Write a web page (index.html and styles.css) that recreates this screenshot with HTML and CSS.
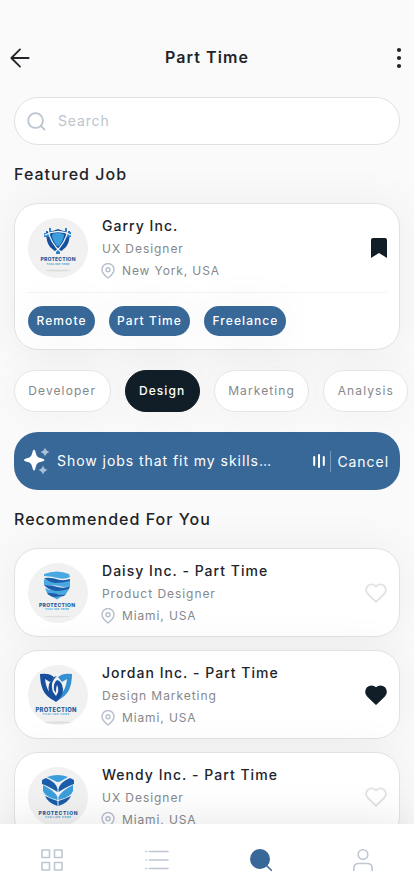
FILE: index.html
```html
<!DOCTYPE html>
<html lang="en">
<head>
<meta charset="utf-8">
<meta name="viewport" content="width=device-width, initial-scale=1">
<title>Part Time</title>
<link rel="stylesheet" href="styles.css">
</head>
<body>
<svg class="defs" aria-hidden="true">
  <symbol id="pin" viewBox="0 0 24 24"><path d="M12 22.500S3 16 3 9.800a9 9 0 0 1 18 0C21 16 12 22.500 12 22.500Z"/><circle cx="12" cy="10" r="3"/></symbol>
  <symbol id="heart" viewBox="0 0 24 22"><path d="M12 20.700 2.900 11.800A6 6 0 0 1 11.300 3.200L12 3.900l.7-.7a6 6 0 0 1 8.400 8.600Z"/></symbol>
</svg>
<div class="screen">
  <header class="topbar">
    <svg class="back" viewBox="0 0 22 22"><path d="M11 1.500 1.500 11 11 20.500M1.500 11H20.500"/></svg>
    <h1>Part Time</h1>
    <svg class="more" viewBox="0 0 6 22"><circle cx="3" cy="3" r="2.100"/><circle cx="3" cy="11" r="2.100"/><circle cx="3" cy="19" r="2.100"/></svg>
  </header>

  <main>
    <div class="search">
      <svg viewBox="0 0 20 20"><circle cx="9" cy="9" r="7.800"/><path d="m14.500 14.500 4 4"/></svg>
      <span>Search</span>
    </div>

    <h2>Featured Job</h2>
    <article class="card featured">
      <div class="job">
        <svg class="logo" viewBox="0 0 60 60">
          <circle cx="30" cy="30" r="30" fill="#f1f1f1"/>
          <path fill="#174f9f" d="M18 13Q24 14 30 11 36 14 42 13 42 24 38 29L30 36 22 29Q18 24 18 13Z"/>
          <path fill="#3b9edb" d="M24 16.500Q30 13 36 16.500 36 22 31 28H29Q24 22 24 16.500Z"/>
          <path fill="#2b7fc6" d="M16 15h5v4h-5ZM38 14h5v5h-5ZM21 10h2v4h-2ZM37 10h2v4h-2ZM28 32h4v4h-4Z"/>
          <path stroke="#f4f7fa" stroke-width="1.300" fill="none" d="M20 11Q22 25 33 34M40 11Q38 25 27 34M17 17Q30 10 43 17"/>
          <text class="brand" x="30" y="43" textLength="35">PROTECTION</text>
          <text class="tagline" x="30" y="46.500" textLength="23">TAGLINE HERE</text>
          <ellipse cx="30" cy="52.500" rx="13" ry="1" fill="#dedede"/>
        </svg>
        <div class="info">
          <h3>Garry Inc.</h3>
          <p>UX Designer</p>
          <p class="place"><svg><use href="#pin"/></svg>New York, USA</p>
        </div>
        <svg class="bookmark" viewBox="0 0 16 20"><path d="M2 0H14Q16 0 16 2V20L8 15 0 20V2Q0 0 2 0Z"/></svg>
      </div>
      <div class="tags"><span>Remote</span><span>Part Time</span><span>Freelance</span></div>
    </article>

    <nav class="chips"><span>Developer</span><span class="active">Design</span><span>Marketing</span><span>Analysis</span></nav>

    <div class="assist">
      <svg class="sparkles" viewBox="0 0 26 28">
        <path fill="#fff" d="M10 2.500Q11 2.500 11.500 5C12.500 9.500 13.500 10.500 18 11.500Q20.500 12 20.500 13T18 14.500C13.500 15.500 12.500 16.500 11.500 21Q11 23.500 10 23.500T8.500 21C7.500 16.500 6.500 15.500 2 14.500Q0 14 0 13T2 11.500C6.500 10.500 7.500 9.500 8.500 5Q9 2.500 10 2.500Z"/>
        <path fill="#a9c0d8" d="M21 0.500Q22 4 25.500 5 22 6 21 9.500 20 6 16.500 5 20 4 21 .5ZM19 18.500Q20 22 23.500 23 20 24 19 27.500 18 24 14.500 23 18 22 19 18.500Z"/>
      </svg>
      <span class="prompt">Show jobs that fit my skills…</span>
      <svg class="wave" viewBox="0 0 12 14"><path d="M1.200 3v8M6 1v12M10.800 3v8"/></svg>
      <span class="cancel">Cancel</span>
    </div>

    <h2>Recommended For You</h2>
    <div class="list">
      <article class="card job">
        <svg class="logo" viewBox="0 0 60 60">
          <circle cx="30" cy="30" r="30" fill="#f1f1f1"/>
          <path fill="#48a9e2" d="M16 11Q29 6 41 11L42 14Q36 17 27 14.500 20 13 16 13ZM16 16Q24 21 33 18 39 16 42 18V23Q36 25 28 22.500 20 22 16 22ZM17 25Q24 29 33 26 38 24.500 41 26L38 31Q33 32 28 31 22 31 19 30ZM22 32.500Q28 35 35 32.500L29 36.500Z"/>
          <path fill="#1b5dab" d="M16 15Q24 14 30 16.500 36 18 42 16V18Q34 20 27 20 20 19 16 15ZM16 22Q24 22 30 24 36 26 42 23L41 26Q34 28 28 28 20 27 16 22ZM19 30Q25 29.500 29 31 33 32 38 31L36 33Q30 34 26 34 21 33 19 30Z"/>
          <text class="brand" x="29" y="43.500" textLength="36">PROTECTION</text>
          <text class="tagline" x="29" y="47" textLength="24">TAGLINE HERE</text>
          <ellipse cx="29" cy="53.500" rx="13" ry=".7" fill="#dedede"/>
        </svg>
        <div class="info">
          <h3>Daisy Inc. - Part Time</h3>
          <p>Product Designer</p>
          <p class="place"><svg><use href="#pin"/></svg>Miami, USA</p>
        </div>
        <svg class="heart"><use href="#heart"/></svg>
      </article>
      <article class="card job">
        <svg class="logo" viewBox="0 0 60 60">
          <circle cx="30" cy="30" r="30" fill="#f1f1f1"/>
          <path fill="#174e9e" d="M12 9Q21 7.500 26 12L22 17 17 14Q18 24 23 29L27 36Q18 32 15 25 12 18 12 9Z"/>
          <path fill="#3590d1" d="M44 9Q35 7.500 30 12L34 17 39 14Q38 24 33 29L29 36Q38 31 41 25 44 18 44 9Z"/>
          <path fill="#174e9e" d="M26 12Q19 18 21 27 23 34 28 37 35 32 35 24 34 16 29 15 25 18 26 25L28 28Q28 22 29 20 32 26 28 31 23 26 24 19 25 14 29 11Z"/>
          <text class="brand big" x="28" y="46.500" textLength="41">PROTECTION</text>
          <text class="tagline" x="28" y="50" textLength="27">TAGLINE HERE</text>
          <ellipse cx="30" cy="57.500" rx="13" ry="1" fill="#dedede"/>
        </svg>
        <div class="info">
          <h3>Jordan Inc. - Part Time</h3>
          <p>Design Marketing</p>
          <p class="place"><svg><use href="#pin"/></svg>Miami, USA</p>
        </div>
        <svg class="heart liked"><use href="#heart"/></svg>
      </article>
      <article class="card job">
        <svg class="logo" viewBox="0 0 60 60">
          <circle cx="30" cy="30" r="30" fill="#f1f1f1"/>
          <path fill="#3b9edb" d="M19 10Q30 6 40 10L33 14Q30 16 27 14ZM15 18Q27 24 29.500 30V33Q17 30 15 24ZM45 18Q33 24 30.500 30V33Q43 30 45 24Z"/>
          <path fill="#1b5dab" d="M18 11Q28 15 29.500 22V25Q20 19 14 17V13ZM42 11Q32 15 30.500 22V25Q40 19 46 17V13ZM17 29Q26 33 29.500 34V39Q20 36 17 29ZM43 29Q34 33 30.500 34V39Q40 36 43 29Z"/>
          <text class="brand" x="30" y="47.500" textLength="39">PROTECTION</text>
          <text class="tagline" x="30" y="51" textLength="26">TAGLINE HERE</text>
        </svg>
        <div class="info">
          <h3>Wendy Inc. - Part Time</h3>
          <p>UX Designer</p>
          <p class="place"><svg><use href="#pin"/></svg>Miami, USA</p>
        </div>
        <svg class="heart"><use href="#heart"/></svg>
      </article>
    </div>
  </main>

  <nav class="tabs">
    <svg viewBox="0 0 24 24"><path d="M2 2h7.500v7.500H2ZM14.500 2H22v7.500h-7.500ZM2 14.500h7.500V22H2ZM14.500 14.500H22V22h-7.500Z"/></svg>
    <svg viewBox="0 0 24 24"><path d="M1 3.500h.5M4.500 3.500H23M1 12h.5M4.500 12H23M1 20.500h.5M4.500 20.500H23"/></svg>
    <svg class="current" viewBox="0 0 24 24"><circle cx="11" cy="11" r="9.200"/><path d="m17 17 5.300 5.300"/></svg>
    <svg viewBox="0 0 24 24"><circle cx="12" cy="6.500" r="4.800"/><path d="M2.800 22.500V20.500Q2.800 15.500 7.800 15.500H16.200Q21.200 15.500 21.200 20.500V22.500"/></svg>
  </nav>
</div>
</body>
</html>
```
FILE: styles.css
```css
* { box-sizing: border-box; margin: 0; padding: 0; }
body { background: #fafafa; color: #212429; font-family: Inter, "Liberation Sans", sans-serif; }
svg { flex: none; display: block; fill: none; stroke-linecap: round; stroke-linejoin: round; }
.defs { display: none; }
.screen { width: 414px; height: 896px; overflow: hidden; display: flex; flex-direction: column; }

.topbar { flex: none; height: 97px; padding: 18px 12px 0 10px; display: grid; grid-template-columns: 1fr auto 1fr; align-items: center; }
.topbar h1 { font-size: 16px; font-weight: 600; letter-spacing: 1.1px; margin: 0 0 1px 2px; }
.back { width: 20px; height: 22px; stroke: #212429; stroke-width: 2; }
.more { width: 6px; height: 22px; fill: #212429; justify-self: end; }

main { flex: 1; min-height: 0; padding: 0 14px; overflow: hidden; }
.search { height: 48px; padding-left: 12px; border: 1px solid #dfe1e3; border-radius: 24px; background: #fff; display: flex; align-items: center; gap: 12px; color: #bcc4d0; font-size: 14px; letter-spacing: .85px; }
.search svg { width: 19px; height: 19px; stroke: #bcc4d0; stroke-width: 1.900; }
.search span { margin-bottom: 1px; }

h2 { height: 58px; line-height: 58px; font-size: 16px; font-weight: 500; letter-spacing: 1.03px; }
.card { border: 1px solid #e1e2e3; border-radius: 24px; background: #fff; box-shadow: 0 0 45px rgba(0, 0, 0, .055); }
.job { display: flex; align-items: center; height: 89px; padding: 0 12px 0 13px; }
.logo { width: 60px; height: 60px; margin-right: 14px; }
.brand, .tagline { text-anchor: middle; font-weight: 800; font-size: 5px; fill: #235b99; }
.brand.big { font-size: 5.800px; }
.tagline { font-size: 2.700px; fill: #58abd8; }
.info { flex: 1; padding-top: 1px; }
.info h3 { margin-bottom: 1px; font-size: 14px; line-height: 22px; font-weight: 500; letter-spacing: 1.03px; }
.info p { font-size: 12px; line-height: 22px; color: #85888c; letter-spacing: .95px; }
.info .place { display: flex; align-items: center; gap: 6px; margin-left: -2px; letter-spacing: .88px; }
.place svg { width: 16px; height: 16px; stroke: #b8c0cf; stroke-width: 2.200; }

.featured { height: 147px; padding: 0 12px 0 13px; }
.featured .job { height: 89px; padding: 0; border-bottom: 1px solid #f3f3f3; }
.bookmark { width: 16px; height: 20px; fill: #111e27; }
.tags { display: flex; gap: 14px; padding-top: 13px; }
.tags span { height: 30px; line-height: 30px; padding: 0 8px 0 8.500px; border-radius: 15px; background: #386898; color: #fff; font-size: 12px; font-weight: 500; letter-spacing: 1.08px; box-shadow: 0 0 45px rgba(0, 0, 0, .05); }

.chips { display: flex; gap: 14px; width: max-content; margin-top: 20px; }
.chips span { height: 42px; line-height: 40px; padding: 0 13.500px 0 13.300px; border: 1px solid #e5e6e7; border-radius: 21px; background: #fff; color: #85888c; font-size: 12px; letter-spacing: 1.1px; box-shadow: 0 0 45px rgba(0, 0, 0, .045); }
.chips .active { border-color: #111e27; background: #111e27; color: #fff; font-weight: 500; }

.assist { display: flex; align-items: center; height: 58px; margin-top: 20px; padding: 0 11px 0 10px; border-radius: 24px; background: #386898; color: #fff; font-size: 14px; letter-spacing: .95px; }
.sparkles { width: 26px; height: 28px; margin-right: 7px; }
.prompt { flex: 1; margin-bottom: 1px; }
.wave { width: 12px; height: 14px; stroke: #fff; stroke-width: 2; margin-right: 5px; }
.cancel { border-left: 1px solid #7898b8; line-height: 21px; padding-left: 6px; }

.list { display: flex; flex-direction: column; gap: 13px; }
.heart { width: 22px; height: 20px; stroke: #e2e2e2; stroke-width: 2; }
.heart.liked { fill: #111e27; stroke: #111e27; }

.tabs { flex: none; height: 72px; padding-left: 40px; display: grid; grid-template-columns: 105px 104px 102px 24px; align-items: center; background: #fff; box-shadow: 0 0 45px rgba(0, 0, 0, .1); position: relative; }
.tabs svg { width: 24px; height: 24px; stroke: #bec6d3; stroke-width: 1.600; }
.tabs .current { fill: #386898; stroke: #386898; }
```
